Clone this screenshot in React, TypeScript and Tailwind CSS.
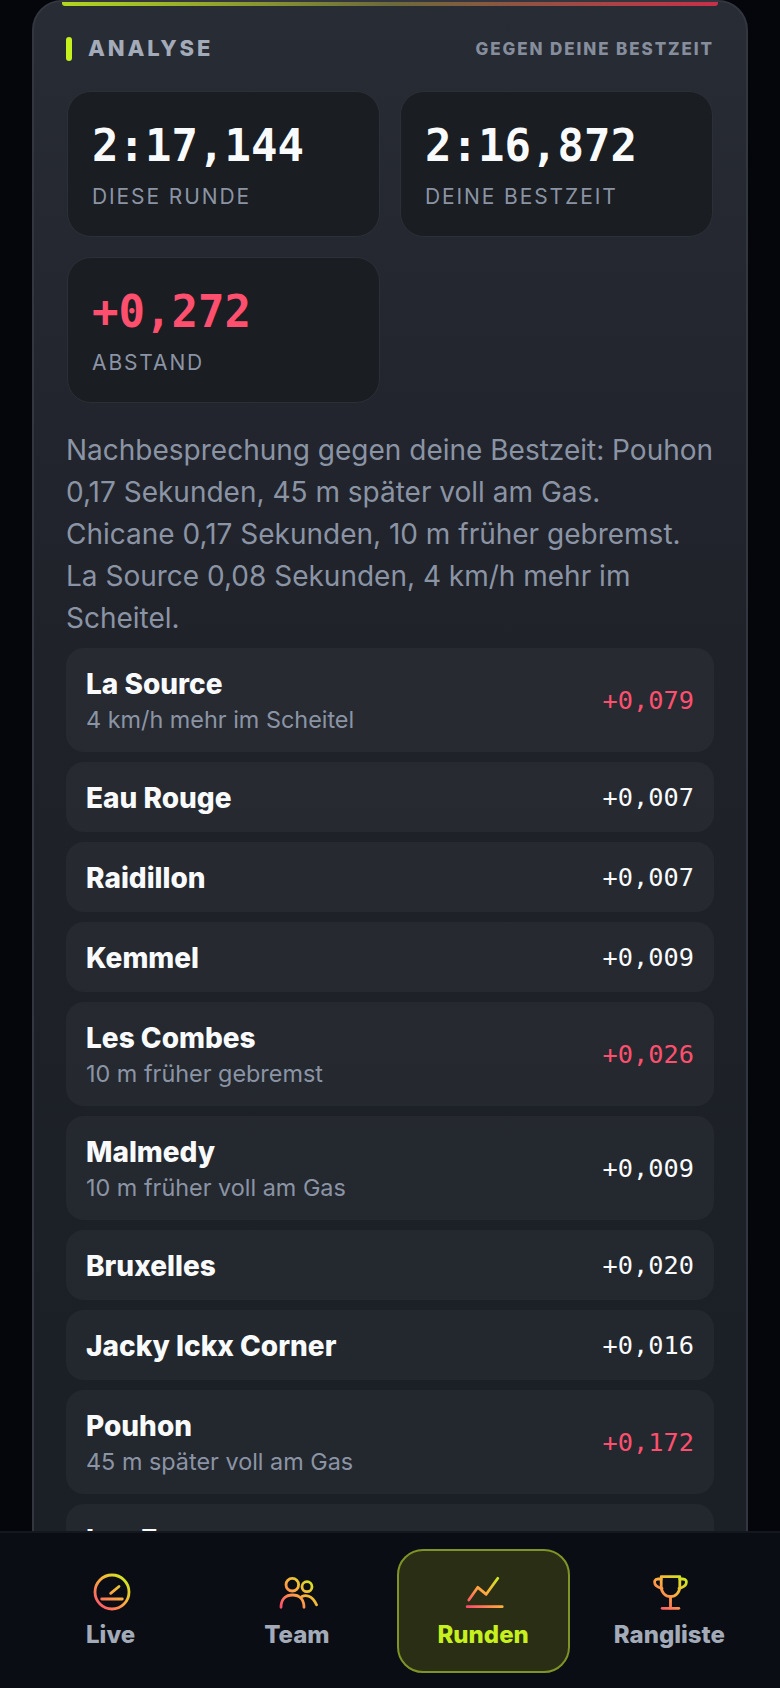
const SANS = "font-['Inter','Noto_Sans',sans-serif]";

const stats = [
  { value: "2:17,144", label: "DIESE RUNDE", red: false },
  { value: "2:16,872", label: "DEINE BESTZEIT", red: false },
  { value: "+0,272", label: "ABSTAND", red: true },
];

const corners = [
  { name: "La Source", note: "4 km/h mehr im Scheitel", delta: "+0,079", red: true },
  { name: "Eau Rouge", delta: "+0,007" },
  { name: "Raidillon", delta: "+0,007" },
  { name: "Kemmel", delta: "+0,009" },
  { name: "Les Combes", note: "10 m früher gebremst", delta: "+0,026", red: true },
  { name: "Malmedy", note: "10 m früher voll am Gas", delta: "+0,009" },
  { name: "Bruxelles", delta: "+0,020" },
  { name: "Jacky Ickx Corner", delta: "+0,016" },
  { name: "Pouhon", note: "45 m später voll am Gas", delta: "+0,172", red: true },
  { name: "Les Fagnes", note: "5 m früher gebremst", delta: "+0,011" },
];

function IconSvg({ id, children }: { id: string; children: React.ReactNode }) {
  return (
    <svg
      width="42"
      height="42"
      viewBox="0 0 42 42"
      fill="none"
      stroke={`url(#${id})`}
      strokeWidth="2.8"
      strokeLinecap="round"
      strokeLinejoin="round"
    >
      <defs>
        <linearGradient id={id} gradientUnits="userSpaceOnUse" x1="36" y1="5" x2="6" y2="37">
          <stop offset="0" stopColor="#c8f01e" />
          <stop offset="0.5" stopColor="#ffa940" />
          <stop offset="1" stopColor="#ff4d6d" />
        </linearGradient>
      </defs>
      {children}
    </svg>
  );
}

const navItems = [
  {
    label: "Live",
    icon: (
      <IconSvg id="g-live">
        <g transform="translate(1 0)">
          <circle cx="21" cy="21" r="17" />
          <path d="M19.7 22.3 L28 15.5" />
          <path d="M10.7 28 H31.3" />
        </g>
      </IconSvg>
    ),
  },
  {
    label: "Team",
    icon: (
      <IconSvg id="g-team">
        <circle cx="16.3" cy="13.7" r="6.3" />
        <circle cx="31" cy="15.7" r="5" />
        <path d="M5 36.3 C5 28 10 24 16.5 24 C23 24 28 28 28 36.3" />
        <path d="M26 25.5 C29 24 36 23.5 40.5 33.8" />
      </IconSvg>
    ),
  },
  {
    label: "Runden",
    active: true,
    icon: (
      <IconSvg id="g-runden">
        <g transform="translate(1.5 0)">
          <path d="M5.3 29 L14.3 16.3 L22.7 23.3 L34.3 7.3" />
          <path d="M3.7 35.7 H38.7" />
        </g>
      </IconSvg>
    ),
  },
  {
    label: "Rangliste",
    icon: (
      <IconSvg id="g-rang">
        <g transform="translate(1.5 0)">
          <path d="M11.7 5.7 H30.3 V15.5 C30.3 21.5 26 25.7 21 25.7 C16 25.7 11.7 21.5 11.7 15.5 Z" />
          <path d="M11.7 8 H8.5 C5 8 4.5 11 5.5 13 C6.5 15.5 9 16.5 12.5 17.5" />
          <path d="M30.3 8 H33.5 C37 8 37.5 11 36.5 13 C35.5 15.5 33 16.5 29.5 17.5" />
          <path d="M21 25.7 V37" />
          <path d="M12.7 37.3 H29.3" />
        </g>
      </IconSvg>
    ),
  },
];

export default function App() {
  return (
    <div className={`flex h-[1688px] w-[780px] flex-col overflow-hidden bg-[#04060c] ${SANS}`}>
      <main className="min-h-0 flex-1 overflow-hidden px-8">
        <section className="relative rounded-[30px] border-2 border-[#33363f] bg-[linear-gradient(180deg,#282c34,#22252d_25%,#1f2229_40%,#1b1f26_85%)] px-[32px] pt-[30px]">
          <div className="absolute left-[28px] right-[28px] top-[0px] h-[4px] rounded-b-[3px] bg-[linear-gradient(90deg_in_srgb,#b4d620,#6b6a3c_50%,#c8304a)]" />

          <header className="flex items-center justify-between">
            <div className="flex items-center gap-4">
              <span className="h-6 w-[6px] rounded-full bg-[#c6f01e]" />
              <h2 className="text-[22px] font-extrabold tracking-[0.13em] text-[#a3aab8]">ANALYSE</h2>
            </div>
            <span className="pt-[3px] text-[17px] font-extrabold tracking-[0.112em] text-[#868e9d]">GEGEN DEINE BESTZEIT</span>
          </header>

          <div className="mx-px mt-[26px] grid grid-cols-2 gap-5">
            {stats.map((s) => (
              <div key={s.label} className="h-[146px] rounded-[24px] border-[1.5px] border-[#2c2f37] bg-[#1a1d22] px-6 pt-[26px]">
                <div className={`font-['DejaVu_Sans_Mono',monospace] text-[44px] leading-[56px] font-bold ${s.red ? "text-[#ff4f6e]" : "text-[#f8fafc]"}`}>
                  {s.value}
                </div>
                <div className="mt-[7px] text-[21px] tracking-[0.09em] text-[#8b94a5]">{s.label}</div>
              </div>
            ))}
          </div>

          <p className="mt-[26px] text-[28px] leading-[42px] text-[#8b94a5]">
            Nachbesprechung gegen deine Bestzeit: Pouhon 0,17 Sekunden, 45 m später voll am Gas. Chicane 0,17 Sekunden, 10 m früher gebremst. La Source 0,08 Sekunden, 4 km/h mehr im Scheitel.
          </p>

          <ul className="mt-[9px] flex flex-col gap-[10px] pb-10">
            {corners.map((c) => (
              <li
                key={c.name}
                className={`flex items-center justify-between rounded-[18px] bg-white/[0.04] px-5 ${c.note ? "h-[104px]" : "h-[70px] pt-[2px]"}`}
              >
                <div>
                  <div className="text-[28px] leading-[36px] font-extrabold text-[#f8fafc]">{c.name}</div>
                  {c.note && <div className="mt-[3px] text-[23.4px] leading-[30px] text-[#8b94a5]">{c.note}</div>}
                </div>
                <span className={`font-['DejaVu_Sans_Mono',monospace] text-[25.3px] ${c.note ? "pt-[2px]" : ""} ${c.red ? "text-[#ff4f6e]" : "text-[#f8fafc]"}`}>
                  {c.delta}
                </span>
              </li>
            ))}
          </ul>
        </section>
      </main>

      <nav className="grid h-[157px] shrink-0 grid-cols-4 gap-[13px] border-t-2 border-[#14171e] bg-[#0a0d14] px-6 pt-[16px]">
        {navItems.map((n) => (
          <div
            key={n.label}
            className={`flex h-[124px] flex-col items-center rounded-[26px] border-2 pt-[20px] ${
              n.active ? "border-[#7f9427] bg-[#2a2e14] text-[#c6f01e]" : "border-transparent text-[#a3aab8]"
            }`}
          >
            {n.icon}
            <span className="mt-[6px] text-[24px] leading-[32px] font-extrabold">{n.label}</span>
          </div>
        ))}
      </nav>
    </div>
  );
}
